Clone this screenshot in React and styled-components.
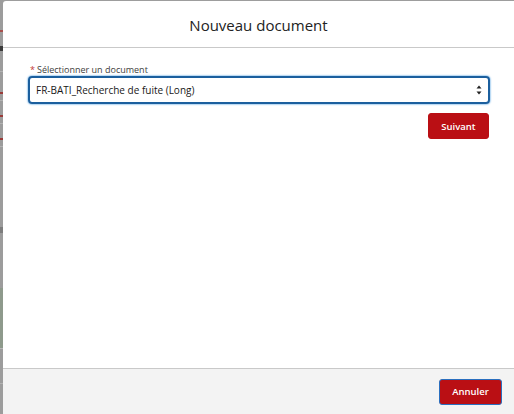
import React from 'react';
import styled, { createGlobalStyle } from 'styled-components';

const GlobalStyle = createGlobalStyle`
  html, body {
    margin: 0;
    padding: 0;
    height: 100%;
    background: #9d9d9d;
  }
  #root {
    height: 100%;
  }
`;

const Screen = styled.div`
  display: flex;
  height: 414px;
  width: 514px;
  overflow: hidden;
  font-family: "Open Sans", "Liberation Sans", sans-serif;
`;

// page behind the overlay, only a sliver shows on the left
const Backdrop = styled.div`
  width: 3px;
  flex: none;
  display: flex;
  flex-direction: column;
  background: #9c9c9c;
`;

const BackMark = styled.div`
  height: ${(p) => p.h || 1}px;
  margin-top: ${(p) => p.gap || 0}px;
  background: ${(p) => p.color || '#8a8a8a'};
`;

const Modal = styled.div`
  flex: 1;
  margin-top: 1px;
  display: flex;
  flex-direction: column;
  background: #fff;
  border-top-left-radius: 3px;
`;

const Header = styled.header`
  height: 46px;
  display: flex;
  align-items: center;
  justify-content: center;
  border-bottom: 1px solid #c9c9c9;
`;

const Title = styled.h2`
  margin: 0;
  margin-top: 2px;
  font-size: 15px;
  font-weight: 400;
  color: #222;
`;

const Body = styled.div`
  flex: 1;
  padding: 16px 24px 0 25px;
  display: flex;
  flex-direction: column;
`;

const Label = styled.label`
  font-size: 9px;
  color: #3e3e3c;
  line-height: 12px;
  padding-left: 2px;
`;

const Required = styled.span`
  color: #c23934;
  margin-right: 2px;
`;

const SelectBox = styled.div`
  height: 28px;
  box-sizing: border-box;
  border: 2px solid #1b5f9e;
  border-radius: 4px;
  display: flex;
  align-items: center;
  justify-content: space-between;
  padding: 0 6px 0 6px;
  font-size: 10px;
  color: #181818;
  box-shadow: 0 0 2px #0176d3;
`;

const Arrows = styled.svg`
  width: 6px;
  height: 10px;
`;

const Actions = styled.div`
  display: flex;
  justify-content: flex-end;
  padding-right: 1px;
`;

const Button = styled.button`
  font-family: "Open Sans", "Liberation Sans", sans-serif;
  font-size: 9.5px;
  font-weight: 600;
  color: #fff;
  background: #ba0f14;
  border: 1px solid ${(p) => (p.focused ? '#2a6fbf' : '#ba0f14')};
  border-radius: 3px;
  height: 26px;
  width: ${(p) => p.w}px;
  padding: 0;
  margin-top: ${(p) => p.mt || 0}px;
`;

const Footer = styled.footer`
  height: 46px;
  border-top: 1px solid #c9c9c9;
  background: #f3f3f3;
  display: flex;
  align-items: center;
  justify-content: flex-end;
  padding: 0 12px;
  box-sizing: border-box;
`;

export default function App() {
  return (
    <>
      <GlobalStyle />
      <Screen>
        <Backdrop>
          <BackMark gap={30} h={2} color="#a8504c" />
          <BackMark gap={14} h={5} color="#3a3a3a" />
          <BackMark gap={20} h={1} color="#b2b2b2" />
          <BackMark gap={20} h={2} color="#9a3a38" />
          <BackMark gap={6} h={1} color="#b2b2b2" />
          <BackMark gap={14} h={2} color="#9a3a38" />
          <BackMark gap={6} h={1} color="#b2b2b2" />
          <BackMark gap={14} h={2} color="#9a3a38" />
          <BackMark gap={6} h={1} color="#b2b2b2" />
          <BackMark gap={80} h={6} color="#7d7d7d" />
          <BackMark gap={55} h={60} color="#8e9a8c" />
          <BackMark gap={0} h={1} color="#b8b8b8" />
          <BackMark gap={34} h={1} color="#b2b2b2" />
        </Backdrop>
        <Modal>
          <Header>
            <Title>Nouveau document</Title>
          </Header>
          <Body>
            <Label>
              <Required>*</Required>Sélectionner un document
            </Label>
            <SelectBox>
              <span>FR-BATI_Recherche de fuite (Long)</span>
              <Arrows viewBox="0 0 6 10">
                <path d="M3 0.5 L5.5 3.5 L0.5 3.5 Z" fill="#222" />
                <path d="M3 9.5 L5.5 6.5 L0.5 6.5 Z" fill="#222" />
              </Arrows>
            </SelectBox>
            <Actions>
              <Button mt={9} w={61}>Suivant</Button>
            </Actions>
          </Body>
          <Footer>
            <Button focused w={63}>Annuler</Button>
          </Footer>
        </Modal>
      </Screen>
    </>
  );
}
